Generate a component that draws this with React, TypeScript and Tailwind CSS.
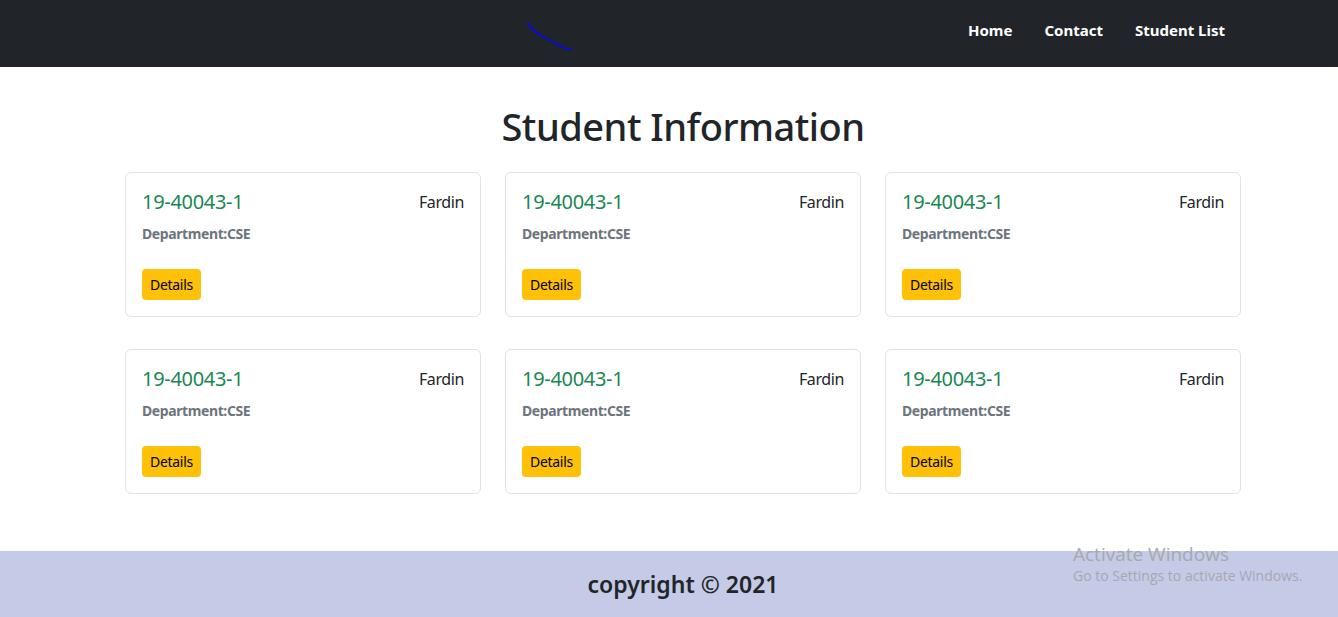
import React from 'react';

const FONT = { fontFamily: '"Noto Sans", "Open Sans", sans-serif' };

const students = Array.from({ length: 6 }, () => ({
  id: '19-40043-1',
  name: 'Fardin',
  dept: 'CSE',
}));

const StudentCard = ({ id, name, dept }: { id: string; name: string; dept: string }) => (
  <div className="flex h-[145px] flex-col rounded-md border border-[#dfe2e6] bg-white px-4 pt-[14px]">
    <div className="flex items-center justify-between">
      <h5 className="text-[20px] leading-[30px] tracking-[-0.3px] text-[#198754]">{id}</h5>
      <span className="text-[16px] leading-6 tracking-[-0.4px] text-[#212529]">{name}</span>
    </div>
    <p className="mt-[7px] text-[14px] font-bold leading-5 tracking-[-0.4px] text-[#6c757d]">Department:{dept}</p>
    <div className="mt-[25px]">
      <button className="h-[31px] rounded-[4px] bg-[#ffc107] px-[8px] text-[14px] tracking-[-0.3px] text-black">Details</button>
    </div>
  </div>
);

const App: React.FC = () => {
  return (
    <div className="relative flex min-h-[617px] flex-col bg-white" style={FONT}>
      {/* NAVBAR */}
      <nav className="flex h-[67px] items-center bg-[#212529] pr-[113px]">
        <svg width="50" height="34" viewBox="0 0 50 34" className="ml-[525px] mt-[2px]">
          <path
            d="M3 5 C6 10 9 14 15 17 C22 21 28 24 34 27 C38 30 41 31 46 32"
            stroke="#0a0ad8"
            strokeWidth="2"
            fill="none"
            strokeLinecap="round"
          />
        </svg>
        <ul className="mb-[6px] ml-auto flex items-center gap-[32px] text-[15px] font-bold text-white">
          <li>Home</li>
          <li>Contact</li>
          <li>Student List</li>
        </ul>
      </nav>

      {/* MAIN */}
      <main className="flex-1 pb-[57px]">
        <div className="ml-[125px] w-[1116px]">
          <h1 className="mt-[35px] text-center text-[38px] font-medium leading-[48px] tracking-[-0.5px] text-[#212529]">
            Student Information
          </h1>
          <div className="mt-[22px] grid grid-cols-3 gap-x-6 gap-y-8">
            {students.map((s, i) => (
              <StudentCard key={i} {...s} />
            ))}
          </div>
        </div>
      </main>

      {/* FOOTER */}
      <footer className="flex h-[66px] items-center justify-center bg-[#c5cae6] pl-[28px]">
        <p className="text-[23px] font-semibold text-[#212529]">copyright © 2021</p>
      </footer>

      {/* Windows watermark */}
      <div className="pointer-events-none absolute left-[1073px] top-[542px] text-[#a6a8b0]" style={{ fontFamily: '"Open Sans", sans-serif' }}>
        <div className="text-[19px] leading-6">Activate Windows</div>
        <div className="text-[14px] leading-5">Go to Settings to activate Windows.</div>
      </div>
    </div>
  );
};

export default App;
